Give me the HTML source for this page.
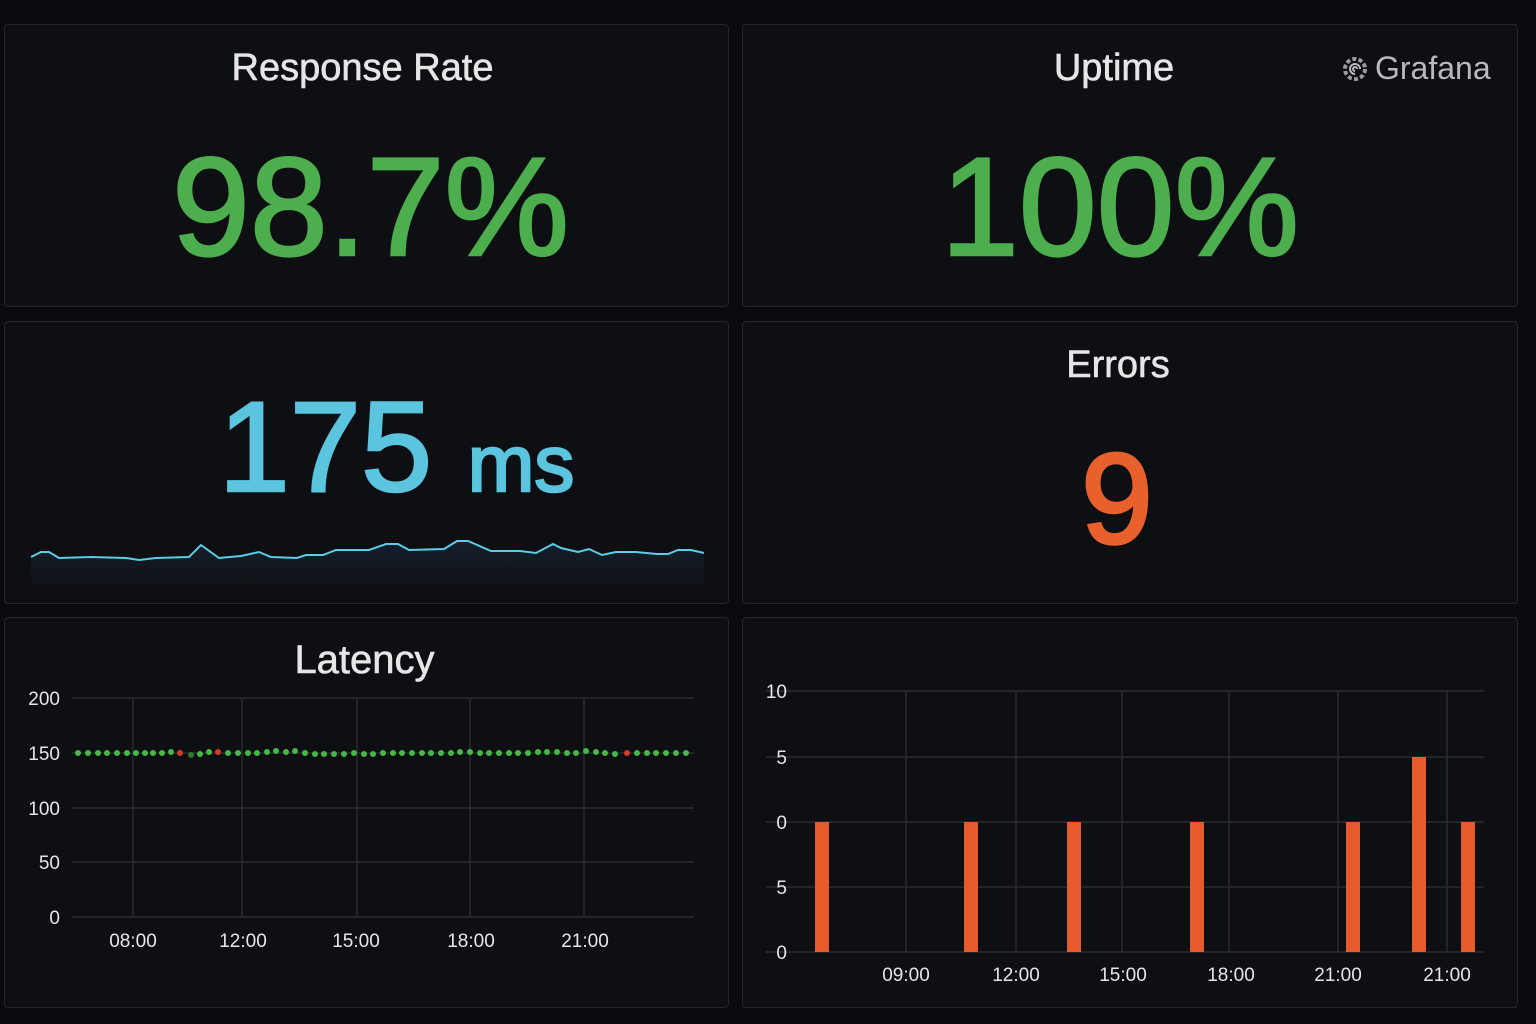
<!DOCTYPE html>
<html><head><meta charset="utf-8"><style>
html,body{margin:0;padding:0;background:#0a0b0e;width:1536px;height:1024px;overflow:hidden;font-family:"Liberation Sans",sans-serif}
.p{position:absolute;background:#0e0f13;border:1px solid #24262c;border-radius:4px;box-sizing:border-box}
.t{position:absolute;left:0;right:0;text-align:center;color:#e6e6e9;font-size:38px;-webkit-text-stroke:0.6px #e6e6e9}
.big{position:absolute;left:0;right:0;text-align:center;font-weight:normal;letter-spacing:0}
svg{position:absolute;left:0;top:0}
</style></head><body>
<div class="p" style="left:4px;top:24px;width:725px;height:283px">
 <div class="t" style="top:22px;left:-8px">Response Rate</div>
 <div class="big" style="top:101px;left:8px;font-size:140px;color:#4cae4c;-webkit-text-stroke:2.5px #4cae4c">98.7%</div>
</div>
<div class="p" style="left:742px;top:24px;width:776px;height:283px">
 <div class="t" style="top:22px;left:-32px">Uptime</div>
 <div style="position:absolute;left:598px;top:25px;color:#b8b9bd;font-size:32px;display:flex;align-items:center">
  <svg style="position:static;margin-right:6px" width="28" height="28" viewBox="0 0 28 28"><circle cx="14" cy="14" r="10" fill="none" stroke="#9a9ba0" stroke-width="4" stroke-dasharray="4 2.3"/><circle cx="14" cy="14" r="8" fill="#0e0f13"/><path d="M14 19a5 5 0 1 1 5-5M14 16a2 2 0 1 1 2-2" fill="none" stroke="#b8b9bd" stroke-width="2"/></svg>Grafana</div>
 <div class="big" style="top:101px;left:-20px;font-size:140px;color:#4cae4c;-webkit-text-stroke:2.5px #4cae4c">100%</div>
</div>
<div class="p" style="left:4px;top:321px;width:725px;height:283px">
 <div class="big" style="top:52px;left:60px;font-size:128px;color:#5bc4de;-webkit-text-stroke:2.5px #5bc4de">175 <span style="font-size:80px">ms</span></div>
 <svg width="725" height="283"><defs><linearGradient id="g" x1="0" y1="0" x2="0" y2="1"><stop offset="0" stop-color="#15202b"/><stop offset="1" stop-color="#0e0f13"/></linearGradient></defs>
 <polyline transform="translate(-4,-321)" points="30,556 40,551 48,551 58,557 90,556 125,557 138,559 155,557 188,556 200,544 218,557 240,555 258,551 270,556 296,557 305,554 322,554 335,549 368,549 385,543 397,543 408,549 443,548 456,540 467,540 490,550 519,550 535,552 552,543 560,547 577,551 588,548 601,554 615,551 635,551 656,553 667,553 677,549 690,549 703,552 703,590 30,590" fill="url(#g)" stroke="none"/>
 <polyline transform="translate(-4,-321)" points="30,556 40,551 48,551 58,557 90,556 125,557 138,559 155,557 188,556 200,544 218,557 240,555 258,551 270,556 296,557 305,554 322,554 335,549 368,549 385,543 397,543 408,549 443,548 456,540 467,540 490,550 519,550 535,552 552,543 560,547 577,551 588,548 601,554 615,551 635,551 656,553 667,553 677,549 690,549 703,552" fill="none" stroke="#5bcde6" stroke-width="2"/>
 </svg>
</div>
<div class="p" style="left:742px;top:321px;width:776px;height:283px">
 <div class="t" style="top:22px;left:-24px">Errors</div>
 <div class="big" style="top:104px;left:-26px;font-size:128px;color:#e8602c;-webkit-text-stroke:3.5px #e8602c">9</div>
</div>
<div class="p" style="left:4px;top:617px;width:725px;height:391px">
 <div class="t" style="top:20px;left:-4px;font-size:40px">Latency</div>
</div>
<div class="p" style="left:742px;top:617px;width:776px;height:391px"></div>
<svg width="1536" height="1024" style="font-family:'Liberation Sans',sans-serif;font-size:19px;fill:#e6e6e9">
 <g stroke="#2e3036" stroke-width="1.3">
  <line x1="72" y1="698" x2="694" y2="698"/><line x1="72" y1="753" x2="694" y2="753"/><line x1="72" y1="808" x2="694" y2="808"/><line x1="72" y1="862" x2="694" y2="862"/><line x1="72" y1="917" x2="694" y2="917"/>
  <line x1="133" y1="698" x2="133" y2="917"/><line x1="242" y1="698" x2="242" y2="917"/><line x1="357" y1="698" x2="357" y2="917"/><line x1="470" y1="698" x2="470" y2="917"/><line x1="584" y1="698" x2="584" y2="917"/>
  <line x1="766" y1="691" x2="1484" y2="691"/><line x1="766" y1="757" x2="1484" y2="757"/><line x1="766" y1="822" x2="1484" y2="822"/><line x1="766" y1="887" x2="1484" y2="887"/><line x1="766" y1="952" x2="1484" y2="952"/>
  <line x1="906" y1="691" x2="906" y2="952"/><line x1="1016" y1="691" x2="1016" y2="952"/><line x1="1122" y1="691" x2="1122" y2="952"/><line x1="1229" y1="691" x2="1229" y2="952"/><line x1="1338" y1="691" x2="1338" y2="952"/><line x1="1447" y1="691" x2="1447" y2="952"/>
 </g>
 <g text-anchor="end"><text x="60" y="705">200</text><text x="60" y="760">150</text><text x="60" y="815">100</text><text x="60" y="869">50</text><text x="60" y="924">0</text>
 <text x="787" y="698">10</text><text x="787" y="764">5</text><text x="787" y="829">0</text><text x="787" y="894">5</text><text x="787" y="959">0</text></g>
 <g text-anchor="middle"><text x="133" y="947">08:00</text><text x="243" y="947">12:00</text><text x="356" y="947">15:00</text><text x="471" y="947">18:00</text><text x="585" y="947">21:00</text>
 <text x="906" y="981">09:00</text><text x="1016" y="981">12:00</text><text x="1123" y="981">15:00</text><text x="1231" y="981">18:00</text><text x="1338" y="981">21:00</text><text x="1447" y="981">21:00</text></g>
 <g fill="#e65a2c"><rect x="815" y="822" width="14" height="130"/><rect x="964" y="822" width="14" height="130"/><rect x="1067" y="822" width="14" height="130"/><rect x="1190" y="822" width="14" height="130"/><rect x="1346" y="822" width="14" height="130"/><rect x="1412" y="757" width="14" height="195"/><rect x="1461" y="822" width="14" height="130"/></g>
 <g fill="#45b845">
  <circle cx="78" cy="753" r="3"/><circle cx="88" cy="753" r="3"/><circle cx="98" cy="753" r="3"/><circle cx="107" cy="753" r="3"/><circle cx="117" cy="753" r="3"/><circle cx="127" cy="753" r="3"/><circle cx="136" cy="753" r="3"/><circle cx="145" cy="753" r="3"/><circle cx="153" cy="753" r="3"/><circle cx="162" cy="753" r="3"/><circle cx="171" cy="752" r="3"/><circle cx="191" cy="755" r="3" fill="#2f7a2f"/><circle cx="200" cy="754" r="3"/><circle cx="209" cy="752" r="3"/><circle cx="228" cy="753" r="3"/><circle cx="238" cy="753" r="3"/><circle cx="248" cy="753" r="3"/><circle cx="257" cy="753" r="3"/><circle cx="267" cy="752" r="3"/><circle cx="276" cy="751" r="3"/><circle cx="286" cy="752" r="3"/><circle cx="295" cy="751" r="3"/><circle cx="305" cy="753" r="3"/><circle cx="315" cy="754" r="3"/><circle cx="324" cy="754" r="3"/><circle cx="334" cy="754" r="3"/><circle cx="344" cy="754" r="3"/><circle cx="354" cy="753" r="3"/><circle cx="364" cy="754" r="3"/><circle cx="373" cy="754" r="3"/><circle cx="383" cy="753" r="3"/><circle cx="393" cy="753" r="3"/><circle cx="402" cy="753" r="3"/><circle cx="412" cy="753" r="3"/><circle cx="422" cy="753" r="3"/><circle cx="431" cy="753" r="3"/><circle cx="441" cy="753" r="3"/><circle cx="451" cy="753" r="3"/><circle cx="460" cy="752" r="3"/><circle cx="470" cy="752" r="3"/><circle cx="480" cy="753" r="3"/><circle cx="489" cy="753" r="3"/><circle cx="499" cy="753" r="3"/><circle cx="509" cy="753" r="3"/><circle cx="518" cy="753" r="3"/><circle cx="528" cy="753" r="3"/><circle cx="538" cy="752" r="3"/><circle cx="547" cy="752" r="3"/><circle cx="557" cy="752" r="3"/><circle cx="567" cy="753" r="3"/><circle cx="576" cy="753" r="3"/><circle cx="586" cy="751" r="3"/><circle cx="596" cy="752" r="3"/><circle cx="605" cy="753" r="3"/><circle cx="615" cy="754" r="3"/><circle cx="637" cy="753" r="3"/><circle cx="647" cy="753" r="3"/><circle cx="656" cy="753" r="3"/><circle cx="666" cy="753" r="3"/><circle cx="676" cy="753" r="3"/><circle cx="686" cy="753" r="3"/>
 </g>
 <g fill="#d23a2a"><circle cx="180" cy="753" r="3"/><circle cx="218" cy="752" r="3"/><circle cx="627" cy="753" r="3"/></g>
</svg>
</body></html>
